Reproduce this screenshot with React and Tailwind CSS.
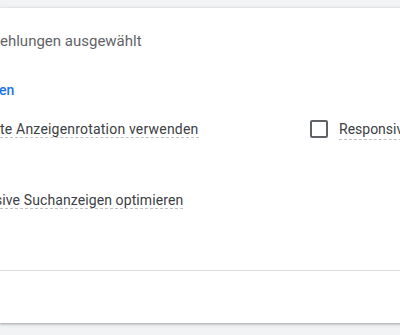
export default function App() {
  return (
    <div className="h-[335px] w-[400px] overflow-hidden bg-[#f1f3f4] pt-2 font-['Roboto',sans-serif]">
      <div className="flex h-[315px] w-[480px] flex-col bg-white shadow-[0_1px_2px_rgba(60,64,67,0.3),0_1px_3px_1px_rgba(60,64,67,0.15)]">
        <div className="h-[262px] pt-[23px]">
          <p className="whitespace-nowrap text-[15px] leading-5 text-[#5f6368]">ehlungen ausgewählt</p>
          <p className="mt-[29px] -ml-px text-[14px] font-medium leading-5 text-[#1a73e8]">en</p>
          <div className="mt-[17px] flex items-center whitespace-nowrap">
            <div className="w-[310px] shrink-0">
              <span className="border-b border-dashed border-[#bdc1c6] text-[14px] leading-5 tracking-[0.2px] text-[#3c4043]">
                te Anzeigenrotation verwenden
              </span>
            </div>
            <div className="flex shrink-0 items-center gap-[11px]">
              <span className="box-border block h-[18px] w-[18px] rounded-[2px] border-2 border-[#5f6368]" />
              <span className="border-b border-dashed border-[#bdc1c6] text-[14px] leading-5 text-[#3c4043]">
                Responsive Suchanzeigen
              </span>
            </div>
          </div>
          <div className="mt-[47px] -ml-[5px] whitespace-nowrap">
            <span className="border-b border-dashed border-[#bdc1c6] text-[14px] leading-5 tracking-[0.1px] text-[#3c4043]">
              sive Suchanzeigen optimieren
            </span>
          </div>
        </div>
        <div className="border-t border-[#dadce0]" />
        <div className="flex-1" />
      </div>
    </div>
  );
}
